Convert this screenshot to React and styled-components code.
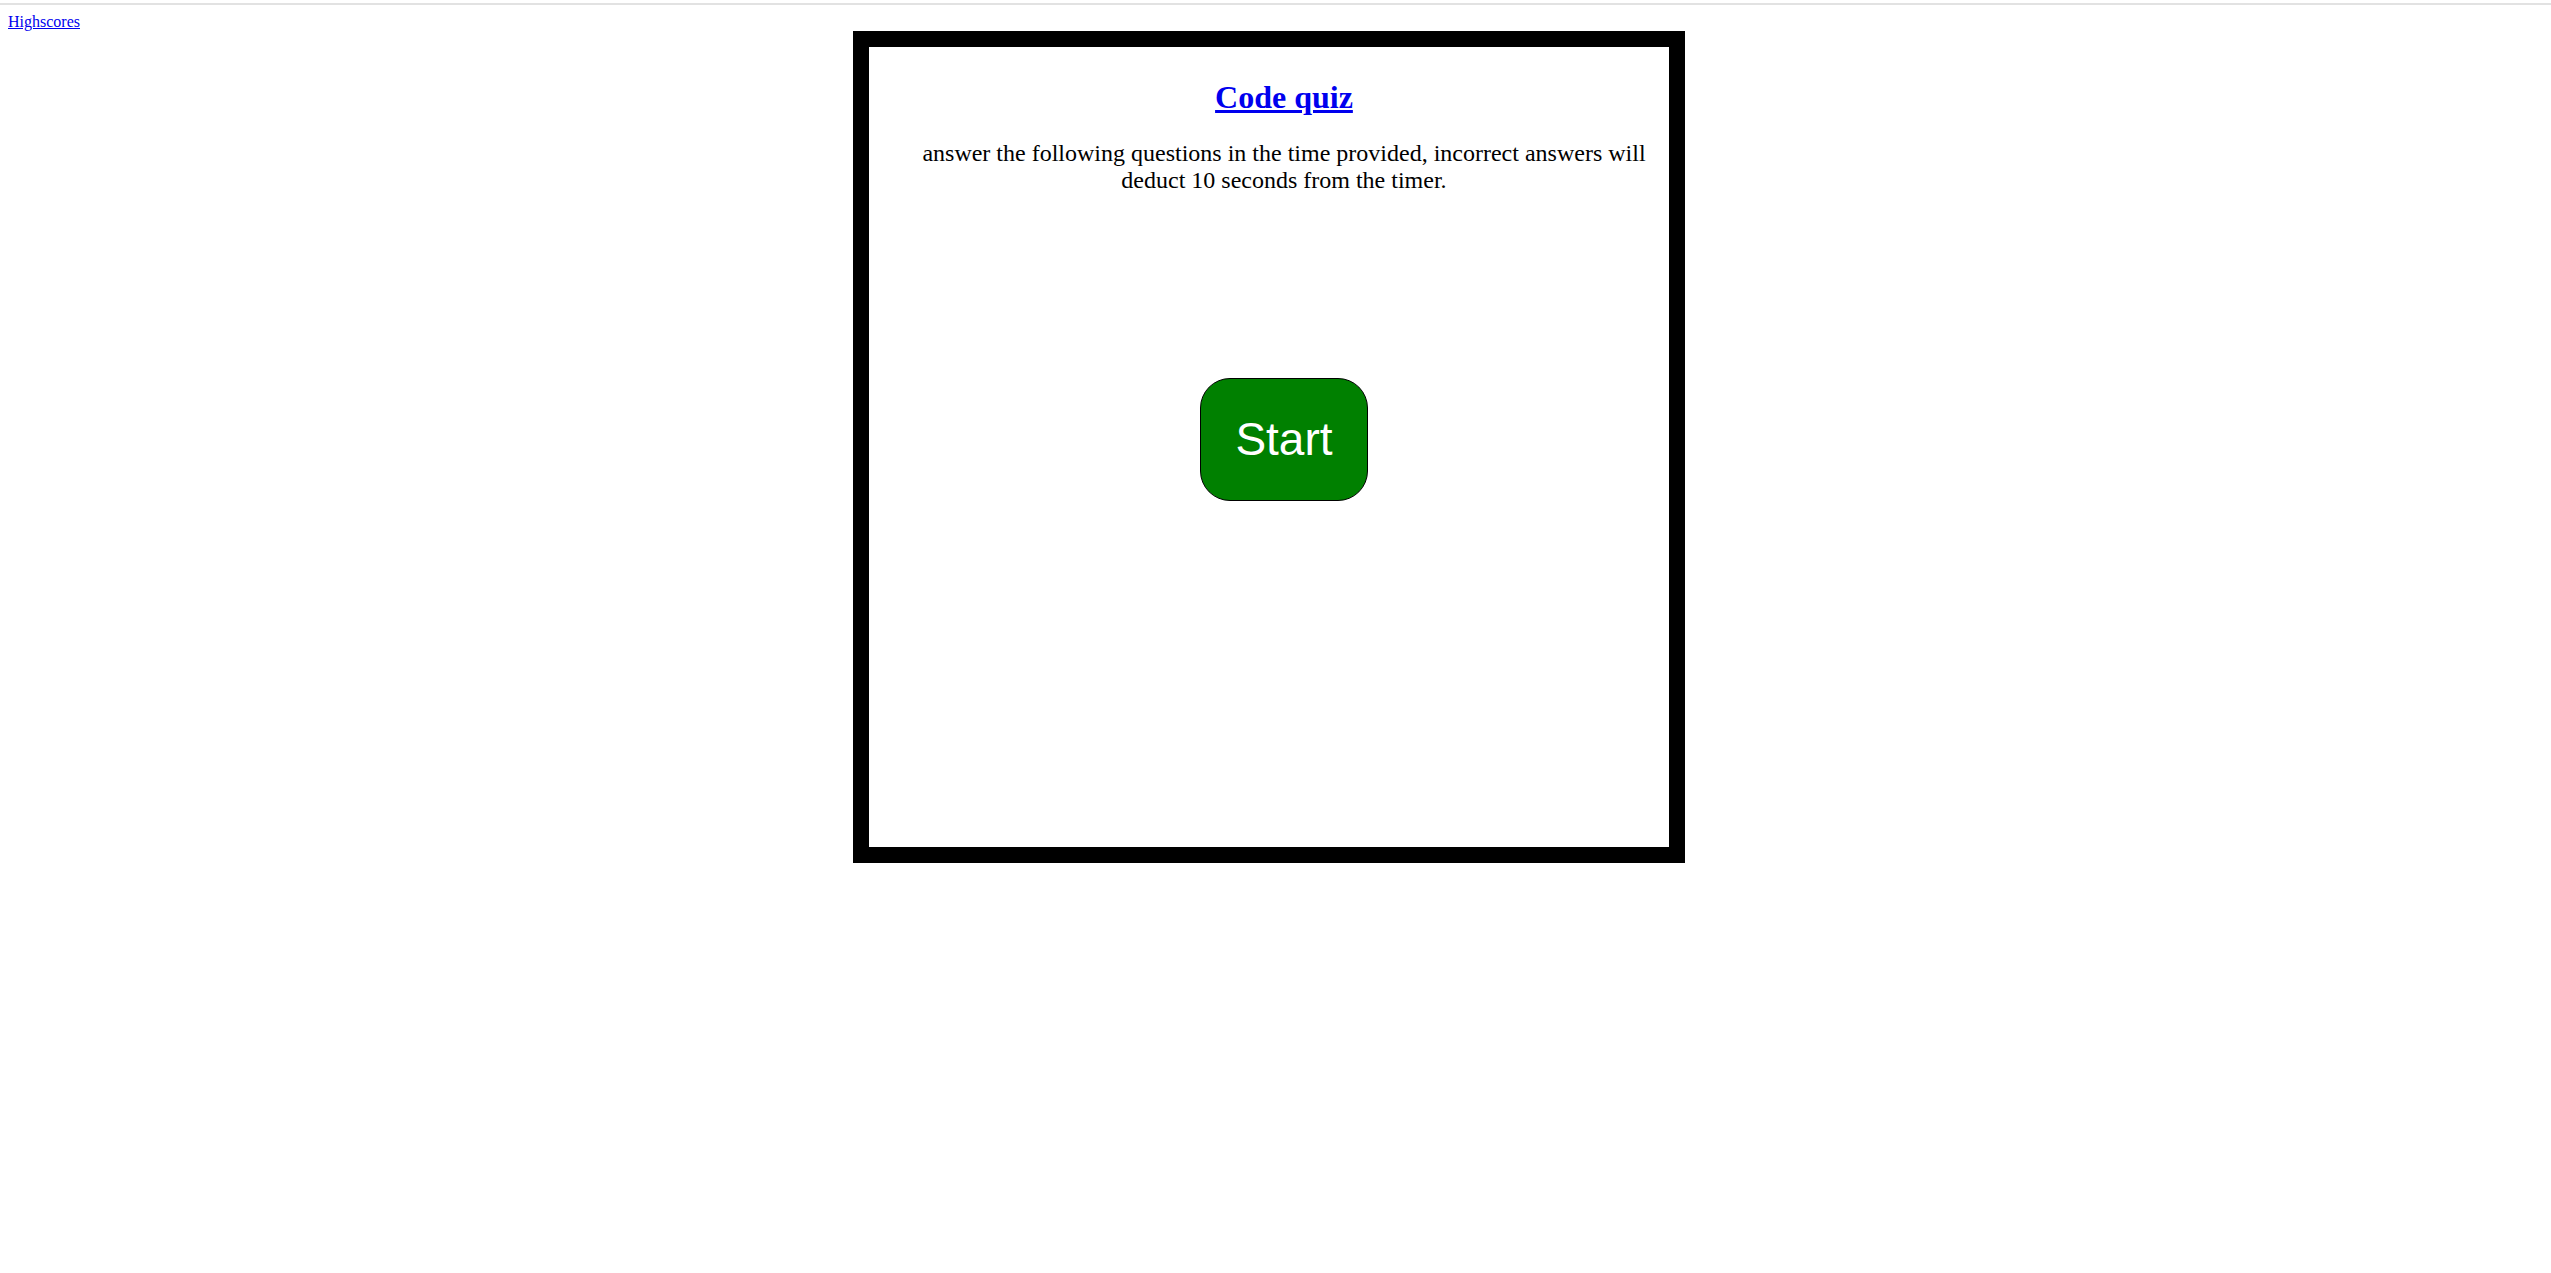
import React from "react";
import styled, { createGlobalStyle } from "styled-components";

const GlobalStyle = createGlobalStyle`
  html, body {
    margin: 0;
    padding: 0;
    background: #ffffff;
  }
  body {
    font-family: "Liberation Serif", "Times New Roman", serif;
    font-size: 16px;
    color: #000000;
  }
`;

const Page = styled.div`
  padding: 0 8px;
`;

const TopRule = styled.div`
  margin: 3px -8px 0;
  height: 2px;
  background: #e2e2e2;
`;

const Nav = styled.nav`
  padding-top: 7.5px;
  line-height: 18.4px;
`;

const NavLink = styled.a`
  color: #0000ee;
  text-decoration: underline;
  font-size: 16px;
`;

const QuizBox = styled.main`
  margin-left: 33.333%;
  width: 800px;
  height: 800px;
  border: 16px solid #000000;
  box-sizing: content-box;
  background: #ffffff;
`;

const Content = styled.div`
  padding: 10px 0 0 30px;
  text-align: center;
`;

const Title = styled.h1`
  margin: 22px 0 24px;
  font-size: 32px;
  font-weight: bold;
  line-height: 36.8px;
`;

const TitleLink = styled.a`
  color: #0000ee;
  text-decoration: underline;
`;

const Intro = styled.p`
  margin: 0;
  font-size: 24px;
  line-height: 27.6px;
`;

const ButtonRow = styled.div`
  display: flex;
  justify-content: center;
  margin-top: 183px;
`;

const StartButton = styled.button`
  font-family: "Liberation Sans", Arial, sans-serif;
  font-size: 46px;
  line-height: 53px;
  color: #ffffff;
  background: #008000;
  border: 1.5px solid #000000;
  border-radius: 30px;
  padding: 34px 34px;
  cursor: pointer;
`;

export default function App() {
  return (
    <>
      <GlobalStyle />
      <Page>
        <TopRule />
        <Nav>
          <NavLink href="#highscores">Highscores</NavLink>
        </Nav>
        <QuizBox>
          <Content>
            <Title>
              <TitleLink href="#quiz">Code quiz</TitleLink>
            </Title>
            <Intro>
              answer the following questions in the time provided, incorrect
              answers will deduct 10 seconds from the timer.
            </Intro>
            <ButtonRow>
              <StartButton type="button">Start</StartButton>
            </ButtonRow>
          </Content>
        </QuizBox>
      </Page>
    </>
  );
}
